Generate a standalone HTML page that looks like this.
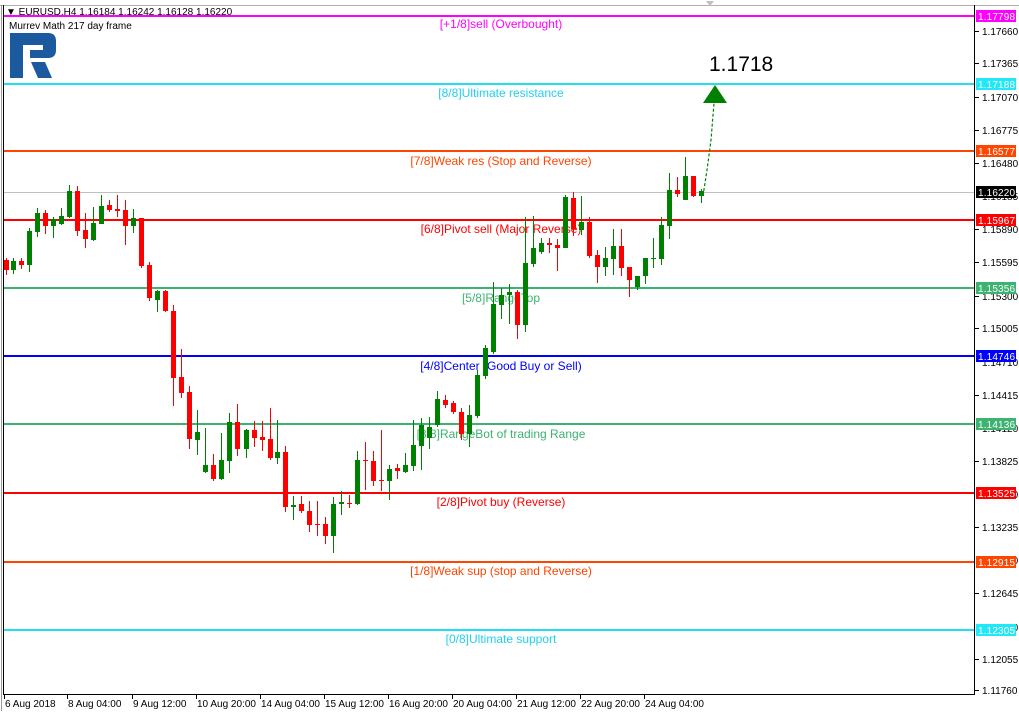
<!DOCTYPE html>
<html><head><meta charset="utf-8"><style>
body{margin:0;background:#fff;width:1019px;height:711px;overflow:hidden;font-family:"Liberation Sans",sans-serif}
svg text{font-family:"Liberation Sans",sans-serif}
</style></head><body>
<svg width="1019" height="711" xmlns="http://www.w3.org/2000/svg">
<rect width="1019" height="711" fill="#fff"/>
<line x1="0" y1="5.5" x2="1019" y2="5.5" stroke="#b0b0b0"/>
<polygon points="706,1 714,1 710,6" fill="#c0c0c0"/>
<line x1="3.5" y1="5" x2="3.5" y2="695" stroke="#000"/>
<line x1="974.5" y1="5" x2="974.5" y2="695" stroke="#000"/>
<line x1="3" y1="694.5" x2="975" y2="694.5" stroke="#000"/>
<line x1="1.5" y1="5" x2="1.5" y2="711" stroke="#999"/>
<text x="6" y="15" font-size="10" fill="#000">▼ EURUSD,H4  1.16184 1.16242 1.16128 1.16220</text>
<text x="9" y="29" font-size="10" fill="#000">Murrev Math 217 day frame</text>
<!-- logo -->
<path d="M10 33 H48 Q56 33 56 41 V50 Q56 58 48 58 H30 V50 H43 V45 H23 V78 H10 Z" fill="#1b5a9e"/>
<path d="M31 62 H45 L52 78 H38 Z" fill="#1b5a9e"/>
<!-- levels -->
<g stroke-width="2">
<line x1="4" y1="16" x2="974" y2="16" stroke="#ff00ff"/>
<line x1="4" y1="84" x2="974" y2="84" stroke="#20e0f0"/>
<line x1="4" y1="151" x2="974" y2="151" stroke="#ff4500"/>
<line x1="4" y1="220" x2="974" y2="220" stroke="#ff0000"/>
<line x1="4" y1="288" x2="974" y2="288" stroke="#3cb371"/>
<line x1="4" y1="356" x2="974" y2="356" stroke="#0000ff"/>
<line x1="4" y1="424" x2="974" y2="424" stroke="#3cb371"/>
<line x1="4" y1="493" x2="974" y2="493" stroke="#ff0000"/>
<line x1="4" y1="562" x2="974" y2="562" stroke="#ff4500"/>
<line x1="4" y1="630" x2="974" y2="630" stroke="#20e0f0"/>
</g>
<line x1="4" y1="192.5" x2="974" y2="192.5" stroke="#c0c0c0"/>
<g font-size="12" text-anchor="middle">
<text x="501" y="28" fill="#ff00ff">[+1/8]sell (Overbought)</text>
<text x="501" y="97" fill="#20d0f0">[8/8]Ultimate resistance</text>
<text x="501" y="165" fill="#ff4500">[7/8]Weak res (Stop and Reverse)</text>
<text x="501" y="233" fill="#ff0000">[6/8]Pivot sell (Major Reverse)</text>
<text x="501" y="302" fill="#3cb371">[5/8]RangeTop</text>
<text x="501" y="370" fill="#0000ff">[4/8]Center (Good Buy or Sell)</text>
<text x="501" y="438" fill="#3cb371">[3/8]RangeBot of trading Range</text>
<text x="501" y="506" fill="#ff0000">[2/8]Pivot buy (Reverse)</text>
<text x="501" y="575" fill="#ff4500">[1/8]Weak sup (stop and Reverse)</text>
<text x="501" y="643" fill="#20d0f0">[0/8]Ultimate support</text>
</g>
<g id="c"></g>
<!-- arrow -->
<polyline points="703,196 707,170 711,140 714,103" fill="none" stroke="#008000" stroke-width="1.2" stroke-dasharray="3,2"/>
<polygon points="715,85 703,103 727,103" fill="#008000"/>
<text x="709" y="71" font-size="21" fill="#000">1.1718</text>
<!-- right axis -->
<g font-size="10" fill="#000">
<text x="982" y="35">1.17660</text>
<text x="982" y="67">1.17365</text>
<text x="982" y="101">1.17070</text>
<text x="982" y="134">1.16775</text>
<text x="982" y="167">1.16480</text>
<text x="982" y="200">1.16185</text>
<text x="982" y="233">1.15890</text>
<text x="982" y="266">1.15595</text>
<text x="982" y="300">1.15300</text>
<text x="982" y="332">1.15005</text>
<text x="982" y="366">1.14710</text>
<text x="982" y="399">1.14415</text>
<text x="982" y="432">1.14120</text>
<text x="982" y="465">1.13825</text>
<text x="982" y="498">1.13530</text>
<text x="982" y="531">1.13235</text>
<text x="982" y="564">1.12940</text>
<text x="982" y="597">1.12645</text>
<text x="982" y="631">1.12350</text>
<text x="982" y="663">1.12055</text>
<text x="982" y="694">1.11760</text>
</g>
<g stroke="#000">
<line x1="975" y1="31.5" x2="979" y2="31.5"/><line x1="975" y1="63.5" x2="979" y2="63.5"/><line x1="975" y1="97.5" x2="979" y2="97.5"/><line x1="975" y1="130.5" x2="979" y2="130.5"/><line x1="975" y1="163.5" x2="979" y2="163.5"/><line x1="975" y1="229.5" x2="979" y2="229.5"/><line x1="975" y1="262.5" x2="979" y2="262.5"/><line x1="975" y1="296.5" x2="979" y2="296.5"/><line x1="975" y1="328.5" x2="979" y2="328.5"/><line x1="975" y1="395.5" x2="979" y2="395.5"/><line x1="975" y1="461.5" x2="979" y2="461.5"/><line x1="975" y1="527.5" x2="979" y2="527.5"/><line x1="975" y1="593.5" x2="979" y2="593.5"/><line x1="975" y1="659.5" x2="979" y2="659.5"/><line x1="975" y1="690.5" x2="979" y2="690.5"/>
</g>
<g font-size="10" fill="#fff">
<rect x="976" y="10" width="40" height="12" fill="#ff00ff"/><text x="978" y="20" textLength="37">1.17798</text>
<rect x="976" y="78" width="40" height="12" fill="#20e8f8"/><text x="978" y="88" textLength="37">1.17188</text>
<rect x="976" y="145" width="40" height="12" fill="#ff4500"/><text x="978" y="155" textLength="37">1.16577</text>
<rect x="976" y="186" width="40" height="12" fill="#000"/><text x="978" y="196" textLength="37">1.16220</text>
<rect x="976" y="214" width="40" height="12" fill="#ff0000"/><text x="978" y="224" textLength="37">1.15967</text>
<rect x="976" y="282" width="40" height="12" fill="#3cb371"/><text x="978" y="292" textLength="37">1.15356</text>
<rect x="976" y="350" width="40" height="12" fill="#0000ff"/><text x="978" y="360" textLength="37">1.14746</text>
<rect x="976" y="418" width="40" height="12" fill="#3cb371"/><text x="978" y="428" textLength="37">1.14136</text>
<rect x="976" y="487" width="40" height="12" fill="#ff0000"/><text x="978" y="497" textLength="37">1.13525</text>
<rect x="976" y="556" width="40" height="12" fill="#ff4500"/><text x="978" y="566" textLength="37">1.12915</text>
<rect x="976" y="624" width="40" height="12" fill="#20e8f8"/><text x="978" y="634" textLength="37">1.12305</text>
</g>
<!-- bottom axis -->
<g font-size="10" fill="#000">
<text x="5" y="707">6 Aug 2018</text>
<text x="68" y="707">8 Aug 04:00</text>
<text x="133" y="707">9 Aug 12:00</text>
<text x="197" y="707">10 Aug 20:00</text>
<text x="261" y="707">14 Aug 04:00</text>
<text x="325" y="707">15 Aug 12:00</text>
<text x="389" y="707">16 Aug 20:00</text>
<text x="453" y="707">20 Aug 04:00</text>
<text x="517" y="707">21 Aug 12:00</text>
<text x="581" y="707">22 Aug 20:00</text>
<text x="645" y="707">24 Aug 04:00</text>
</g>
<g stroke="#000">
<line x1="4.5" y1="695" x2="4.5" y2="699"/><line x1="67.5" y1="695" x2="67.5" y2="699"/><line x1="132.5" y1="695" x2="132.5" y2="699"/><line x1="196.5" y1="695" x2="196.5" y2="699"/><line x1="260.5" y1="695" x2="260.5" y2="699"/><line x1="324.5" y1="695" x2="324.5" y2="699"/><line x1="388.5" y1="695" x2="388.5" y2="699"/><line x1="452.5" y1="695" x2="452.5" y2="699"/><line x1="516.5" y1="695" x2="516.5" y2="699"/><line x1="580.5" y1="695" x2="580.5" y2="699"/><line x1="644.5" y1="695" x2="644.5" y2="699"/>
</g>
</svg>
<script>
var d=[[6,260,270,258,275,'r'],[13,261,270,258,274,'g'],[21,261,265,258,269,'r'],[29,231,265,228,272,'g'],[37,213,232,208,237,'g'],[45,213,226,210,234,'r'],[53,219,226,217,238,'g'],[61,216,224,208,225,'g'],[69,191,217,185,218,'g'],[77,191,231,186,236,'r'],[85,230,239,213,248,'r'],[93,223,240,207,241,'g'],[101,206,224,195,224,'g'],[109,205,210,200,212,'r'],[117,209,211,195,217,'r'],[125,210,226,200,245,'r'],[133,218,226,209,233,'g'],[141,218,266,218,268,'r'],[149,265,298,262,301,'r'],[157,291,300,290,312,'g'],[165,291,311,290,312,'r'],[173,311,378,305,406,'r'],[181,377,393,349,398,'r'],[189,392,439,386,449,'r'],[197,432,440,410,455,'g'],[205,465,472,428,473,'g'],[213,465,479,454,481,'r'],[221,460,479,433,480,'g'],[229,422,461,413,473,'g'],[237,422,449,404,456,'r'],[246,430,449,429,458,'g'],[254,430,438,421,447,'r'],[262,437,440,421,451,'r'],[270,439,458,408,460,'r'],[277,452,458,420,464,'g'],[285,452,507,446,512,'r'],[293,505,507,496,520,'g'],[301,504,511,496,513,'r'],[309,511,525,501,532,'r'],[317,524,525,501,536,'r'],[325,524,536,517,544,'r'],[333,504,536,497,553,'g'],[341,502,504,491,515,'g'],[349,503,504,495,508,'r'],[357,460,504,451,505,'g'],[365,460,461,442,490,'r'],[373,461,481,451,486,'r'],[381,480,481,430,491,'r'],[389,469,481,465,500,'g'],[397,468,471,464,479,'r'],[405,465,472,453,473,'g'],[413,445,466,420,471,'g'],[421,425,446,418,470,'g'],[429,427,438,417,449,'g'],[437,399,425,391,427,'g'],[445,400,405,395,408,'r'],[453,403,412,401,414,'r'],[461,412,434,408,440,'r'],[469,415,434,405,447,'g'],[477,375,416,370,418,'g'],[485,348,376,345,379,'g'],[493,304,352,282,354,'g'],[501,295,305,288,319,'g'],[509,292,295,284,324,'g'],[517,292,325,290,339,'r'],[525,263,325,217,332,'g'],[533,248,264,216,267,'g'],[541,243,252,238,254,'g'],[549,243,245,238,253,'r'],[557,245,248,239,271,'r'],[565,197,248,195,248,'g'],[573,198,229,192,236,'r'],[581,222,230,196,235,'g'],[589,222,256,217,258,'r'],[597,255,267,250,283,'r'],[605,258,267,247,276,'g'],[613,246,259,229,275,'g'],[621,246,268,229,276,'r'],[629,267,280,267,297,'r'],[637,276,287,276,290,'g'],[645,258,276,258,284,'g'],[653,258,259,238,268,'g'],[661,225,259,217,265,'g'],[669,190,226,173,239,'g'],[677,190,194,177,197,'r'],[685,176,200,157,200,'g'],[693,176,196,176,197,'r'],[701,191,196,189,203,'g']];
var s='';d.forEach(function(c){var col=c[5]=='r'?'#ff0000':'#008000';s+='<line x1="'+(c[0]+0.5)+'" y1="'+c[3]+'" x2="'+(c[0]+0.5)+'" y2="'+c[4]+'" stroke="'+col+'"/><rect x="'+(c[0]-2)+'" y="'+c[1]+'" width="5" height="'+Math.max(1,c[2]-c[1])+'" fill="'+col+'"/>';});
document.getElementById('c').innerHTML=s;
</script>
</body></html>
